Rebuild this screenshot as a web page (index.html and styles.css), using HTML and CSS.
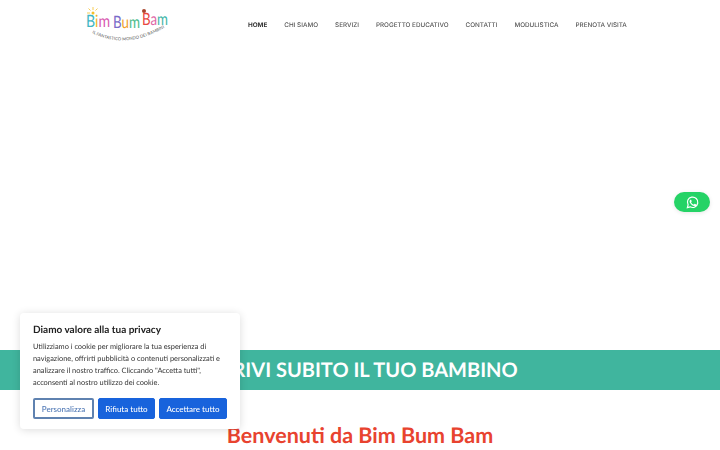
FILE: index.html
```html
<!DOCTYPE html>
<html lang="it">
<head>
  <meta charset="UTF-8" />
  <title>Bim Bum Bam</title>
  <link rel="stylesheet" href="styles.css">
</head>
<body>
  <header class="topbar">
    <a class="logo" href="#">
      <svg width="90" height="46" viewBox="0 0 90 46">
        <circle cx="10" cy="13" r="1.5" fill="#f5c02c"/>
        <path d="M10 10V7M7 13H4M7.500 10.500l-2-2M12.500 10.500l2-2" stroke="#f5c02c" stroke-width=".8"/>
        <circle cx="61" cy="11" r="2" fill="#a8442c"/>
        <text class="logo-word" x="3" y="27" textLength="24" lengthAdjust="spacingAndGlyphs"><tspan fill="#3fb6c4">B</tspan><tspan fill="#f0b429">i</tspan><tspan fill="#d95bb0">m</tspan></text>
        <text class="logo-word" x="30" y="28" textLength="27" lengthAdjust="spacingAndGlyphs"><tspan fill="#7a6cc9">B</tspan><tspan fill="#f2a02c">u</tspan><tspan fill="#4cbc8a">m</tspan></text>
        <text class="logo-word" x="59" y="25" textLength="26" lengthAdjust="spacingAndGlyphs"><tspan fill="#e8483f">B</tspan><tspan fill="#e066a6">a</tspan><tspan fill="#3fb6a8">m</tspan></text>
        <path id="logoArc" d="M9 33Q42 50 81 28" fill="none"/>
        <text class="logo-sub"><textPath href="#logoArc" textLength="76" lengthAdjust="spacing">IL FANTASTICO MONDO DEI BAMBINI</textPath></text>
      </svg>
    </a>
    <nav class="menu">
      <a class="active" href="#">HOME</a>
      <a href="#">CHI SIAMO</a>
      <a href="#">SERVIZI</a>
      <a href="#">PROGETTO EDUCATIVO</a>
      <a href="#">CONTATTI</a>
      <a href="#">MODULISTICA</a>
      <a href="#">PRENOTA VISITA</a>
    </nav>
  </header>

  <section class="hero"></section>

  <div class="band">ISCRIVI SUBITO IL TUO BAMBINO</div>

  <h1 class="welcome">Benvenuti da Bim Bum Bam</h1>

  <a class="whatsapp" href="#" aria-label="WhatsApp">
    <svg width="13" height="13" viewBox="0 0 24 24">
      <path fill="none" stroke="#fff" stroke-width="2.2" d="M2.500 21.500l1.400-5.100A9.600 9.600 0 1 1 7.600 20z"/>
      <path fill="#fff" d="M8.700 6.900c-.3 0-.7.100-1 .5-.4.5-1.100 1.200-1.100 2.700s1.100 3.100 1.300 3.300c.2.200 2.200 3.500 5.400 4.700 2.600 1 3.200.8 3.800.8.600-.1 1.800-.8 2-1.500.3-.7.300-1.400.2-1.500-.1-.2-.3-.2-.7-.4l-2.200-1.100c-.3-.1-.5-.2-.8.200l-1 1.200c-.2.200-.4.300-.7.100-.4-.2-1.400-.5-2.600-1.600-1-.9-1.600-1.900-1.800-2.200-.2-.4 0-.5.100-.7l.5-.6c.2-.2.200-.4.300-.6.100-.2 0-.4 0-.6L9.700 7.500c-.3-.6-.6-.6-1-.6z"/>
    </svg>
  </a>

  <aside class="cookie">
    <p class="cookie-title">Diamo valore alla tua privacy</p>
    <p class="cookie-text">Utilizziamo i cookie per migliorare la tua esperienza di navigazione, offrirti pubblicità o contenuti personalizzati e analizzare il nostro traffico. Cliccando "Accetta tutti", acconsenti al nostro utilizzo dei cookie.</p>
    <div class="cookie-buttons">
      <button class="btn btn-outline">Personalizza</button>
      <button class="btn">Rifiuta tutto</button>
      <button class="btn btn-wide">Accettare tutto</button>
    </div>
  </aside>
</body>
</html>
```

FILE: styles.css
```css
html, body {
  margin: 0;
  height: 450px;
  overflow: hidden;
}
body {
  font-family: "Lato", Arial, sans-serif;
  background: #fff;
  text-rendering: geometricPrecision;
}
a { text-decoration: none; }

.topbar {
  height: 50px;
  display: flex;
  align-items: flex-start;
  padding-left: 83px;
}
.logo { display: block; width: 90px; height: 46px; }
.logo-word { font-family: "Lato", sans-serif; font-size: 17px; font-weight: 400; }
.logo-sub { font-family: "Lato", sans-serif; font-size: 4.200px; fill: #555; }

.menu {
  margin-left: 75px;
  display: flex;
  gap: 17px;
  height: 50px;
  align-items: center;
  will-change: opacity;
}
.menu a {
  font-family: "Inter", Arial, sans-serif;
  font-size: 6.340px;
  font-weight: 500;
  color: #555;
}
.menu a.active { color: #333; font-weight: 700; }

.hero { height: 300px; }

.band {
  height: 40px;
  line-height: 40px;
  background: #40b59e;
  color: #fff;
  text-align: center;
  font-size: 20px;
  font-weight: 700;
}
.welcome {
  margin: 32px 0 0;
  text-align: center;
  font-size: 21.500px;
  line-height: 26px;
  font-weight: 700;
  color: #e8432f;
}

.whatsapp {
  position: fixed;
  right: 10px;
  top: 192px;
  width: 36px;
  height: 20px;
  border-radius: 10px;
  background: #25d366;
  display: flex;
  align-items: center;
  justify-content: center;
  box-shadow: 0 1px 4px rgba(0,0,0,.1);
}

.cookie {
  position: fixed;
  left: 20px;
  top: 313px;
  width: 194px;
  height: 106px;
  padding: 10px 13px 0;
  background: #fff;
  border-radius: 4px;
  box-shadow: 0 1px 8px rgba(0,0,0,.14);
}
.cookie-title {
  margin: 0 0 4px;
  font-size: 10px;
  line-height: 14px;
  font-weight: 700;
  color: #212121;
}
.cookie-text {
  margin: 0 0 9px;
  font-size: 7.400px;
  line-height: 12px;
  color: #333;
}
.cookie-buttons { display: flex; gap: 4px; }
.btn {
  height: 21px;
  width: 57px;
  padding: 0;
  border: 1px solid #1863dc;
  border-radius: 2px;
  background: #1863dc;
  color: #fff;
  font-family: "Lato", sans-serif;
  font-size: 8px;
  font-weight: 500;
}
.btn-outline {
  width: 61px;
  background: #fff;
  color: #4f78b5;
  border: 2px solid #5f82b0;
}
.btn-wide { width: 68px; }
```
